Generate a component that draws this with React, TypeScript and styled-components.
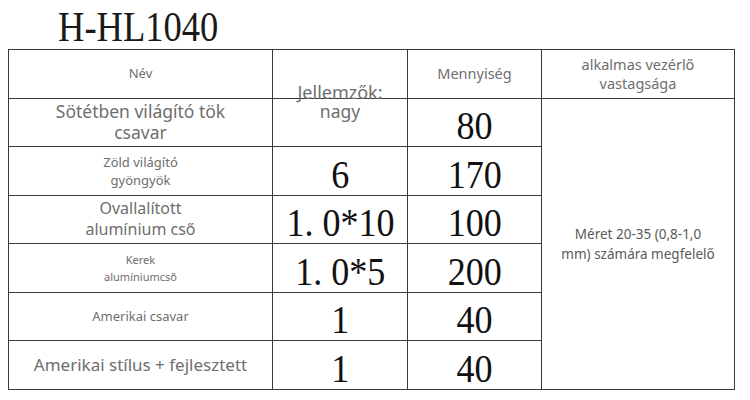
import React from "react";
import styled, { createGlobalStyle } from "styled-components";

const GlobalStyle = createGlobalStyle`
  html, body {
    margin: 0;
    padding: 0;
    background: #ffffff;
  }
`;

const Page = styled.div`
  width: 750px;
  height: 400px;
  padding: 5px 0 0 8px;
  box-sizing: border-box;
  overflow: hidden;
`;

const Title = styled.h1`
  display: inline-block;
  margin: 0 0 0 50px;
  height: 44px;
  font-family: "Liberation Serif", serif;
  font-weight: 400;
  font-size: 42px;
  line-height: 44px;
  color: #1a1a1a;
  transform: scaleX(0.87);
  transform-origin: left center;
`;

const SpecTable = styled.table`
  width: 726px;
  border-collapse: collapse;
  table-layout: fixed;

  th,
  td {
    border: 1.5px solid #383838;
    padding: 0;
    text-align: center;
    vertical-align: middle;
  }

  tr {
    height: 48.5px;
  }
`;

const Label = styled.td<{ $size: number; $lh?: number }>`
  font-family: "Noto Sans", sans-serif;
  font-size: ${(p) => p.$size}px;
  line-height: ${(p) => p.$lh ?? Math.round(p.$size * 1.25)}px;
  color: #6e6e6e;
`;

const HeadCell = styled.th<{ $size: number; $lh?: number }>`
  font-family: "Noto Sans", sans-serif;
  font-weight: 400;
  font-size: ${(p) => p.$size}px;
  line-height: ${(p) => p.$lh ?? Math.round(p.$size * 1.3)}px;
  color: #6e6e6e;
`;

/* "Jellemzők:" sits right on the header's bottom border */
const LowHeadCell = styled(HeadCell)`
  && {
    vertical-align: bottom;
  }
`;

const TopCell = styled(Label)`
  && {
    vertical-align: top;
    padding-top: 2px;
  }
`;

const Num = styled.td`
  font-family: "Liberation Serif", serif;
  font-size: 41px;
  line-height: 40px;
  color: #111;

  && {
    padding-top: 6px;
  }
`;

const NumText = styled.span`
  display: inline-block;
  transform: scaleX(0.88);
`;

const SizeNote = styled.td`
  font-family: "Noto Sans", sans-serif;
  font-size: 13.5px;
  line-height: 20px;
  color: #5a5a5a;
`;

type Row = { name: string; size: number; lh?: number; feature: string; qty: string };

const rows: Row[] = [
  { name: "Zöld világító\ngyöngyök", size: 13, lh: 18, feature: "6", qty: "170" },
  { name: "Ovallalított\nalumínium cső", size: 16, lh: 21, feature: "1. 0*10", qty: "100" },
  { name: "Kerek\nalumíniumcső", size: 11, lh: 17, feature: "1. 0*5", qty: "200" },
  { name: "Amerikai csavar", size: 13, feature: "1", qty: "40" },
  { name: "Amerikai stílus + fejlesztett", size: 17, feature: "1", qty: "40" },
];

const lines = (text: string) =>
  text.split("\n").map((l, i, arr) => (
    <React.Fragment key={i}>
      {l}
      {i < arr.length - 1 && <br />}
    </React.Fragment>
  ));

export default function App() {
  return (
    <>
      <GlobalStyle />
      <Page>
        <Title>H-HL1040</Title>
        <SpecTable>
          <colgroup>
            <col style={{ width: "264px" }} />
            <col style={{ width: "135px" }} />
            <col style={{ width: "134px" }} />
            <col style={{ width: "193px" }} />
          </colgroup>
          <thead>
            <tr>
              <HeadCell $size={13}>Név</HeadCell>
              <LowHeadCell $size={18} $lh={12}>
                Jellemzők:
              </LowHeadCell>
              <HeadCell $size={14.5}>Mennyiség</HeadCell>
              <HeadCell $size={14.5} $lh={19}>
                alkalmas vezérlő
                <br />
                vastagsága
              </HeadCell>
            </tr>
          </thead>
          <tbody>
            <tr>
              <Label $size={17.5} $lh={21}>
                Sötétben világító tök
                <br />
                csavar
              </Label>
              <TopCell $size={17.5} $lh={21}>
                nagy
              </TopCell>
              <Num>
                <NumText>80</NumText>
              </Num>
              <SizeNote rowSpan={6}>
                Méret 20-35 (0,8-1,0
                <br />
                mm) számára megfelelő
              </SizeNote>
            </tr>
            {rows.map((r, i) => (
              <tr key={i}>
                <Label $size={r.size} $lh={r.lh}>
                  {lines(r.name)}
                </Label>
                <Num>
                  <NumText>{r.feature}</NumText>
                </Num>
                <Num>
                  <NumText>{r.qty}</NumText>
                </Num>
              </tr>
            ))}
          </tbody>
        </SpecTable>
      </Page>
    </>
  );
}
